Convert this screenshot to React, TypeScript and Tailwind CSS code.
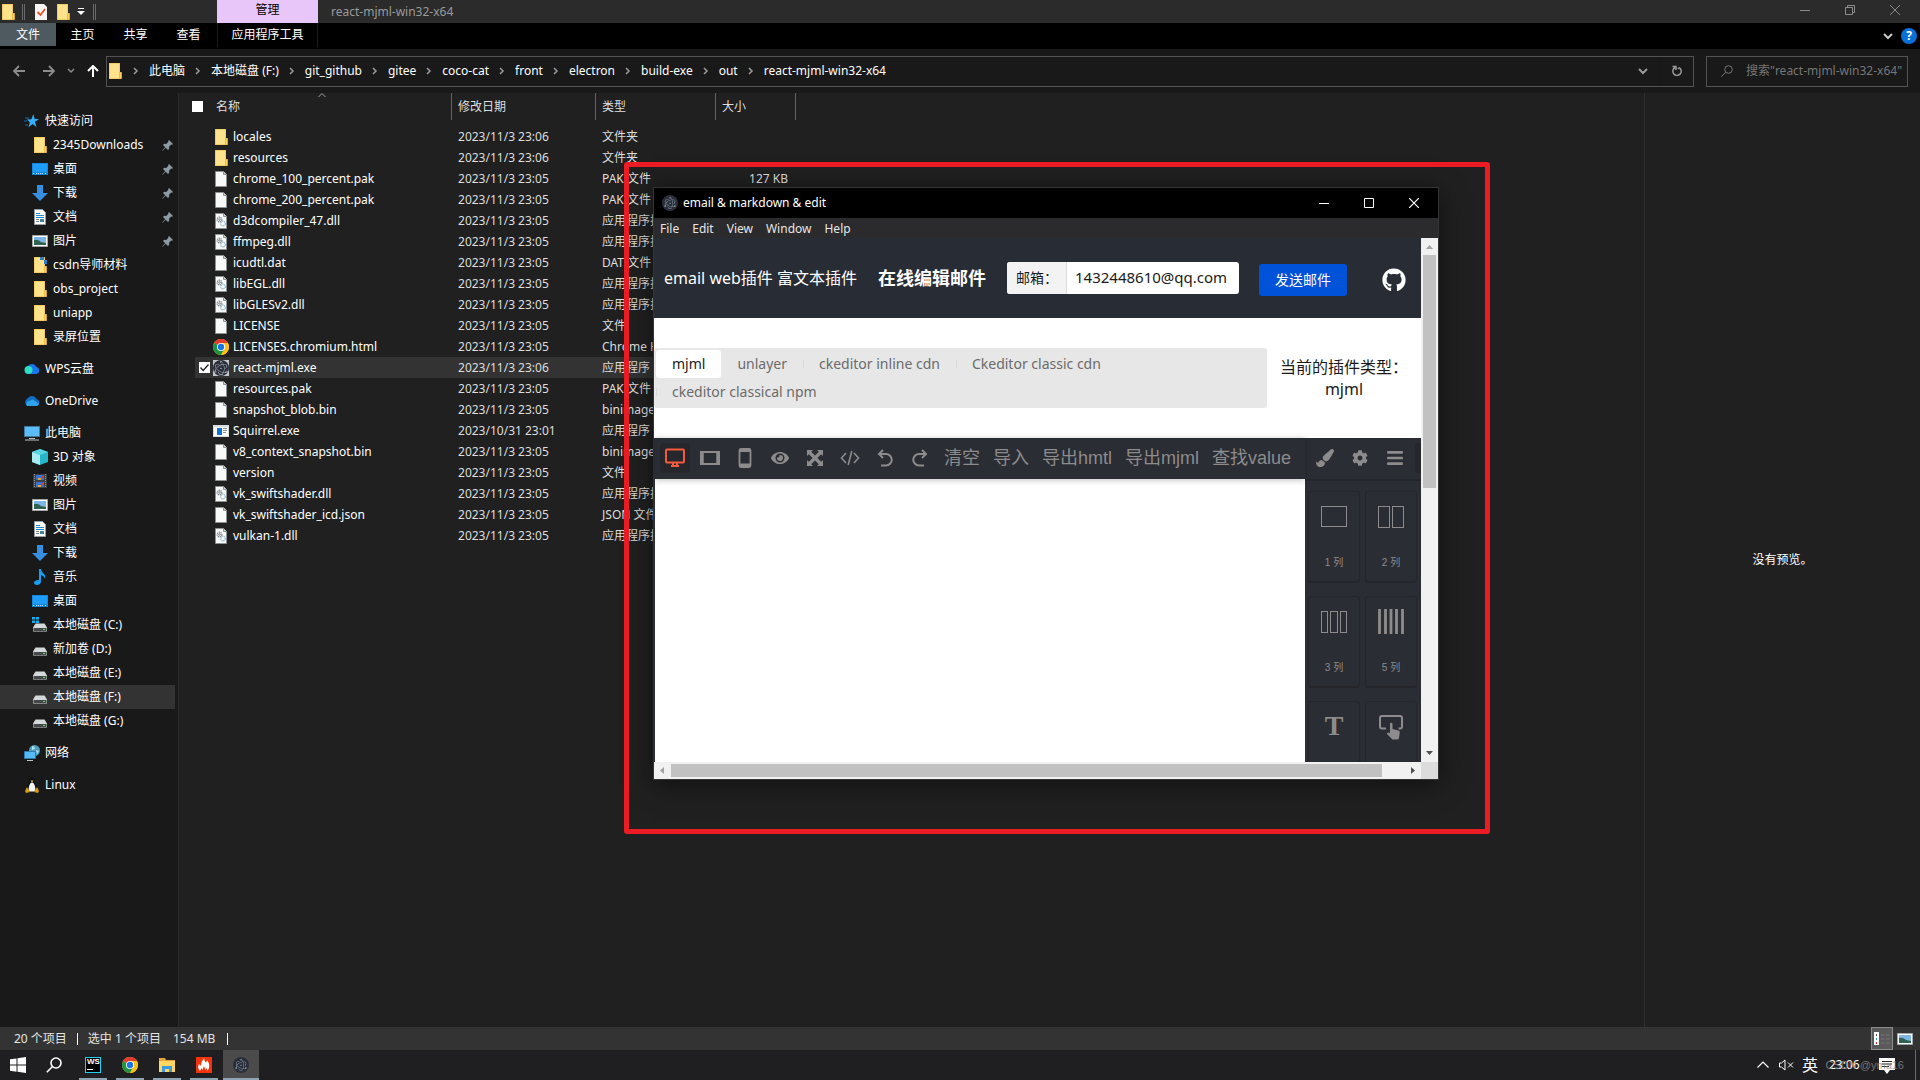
// src/App.tsx
import React from 'react';
import { FaBars, FaCode, FaCog, FaEye, FaGithub, FaPaintBrush } from 'react-icons/fa';
import { SiElectron } from 'react-icons/si';

type FileKind = 'folder' | 'file' | 'dll' | 'chrome' | 'electron' | 'exe';

interface FileRow {
  name: string;
  kind: FileKind;
  date: string;
  type: string;
  size?: string;
}

const files: FileRow[] = [
  { name: 'locales', kind: 'folder', date: '2023/11/3 23:06', type: '文件夹' },
  { name: 'resources', kind: 'folder', date: '2023/11/3 23:06', type: '文件夹' },
  { name: 'chrome_100_percent.pak', kind: 'file', date: '2023/11/3 23:05', type: 'PAK 文件', size: '127 KB' },
  { name: 'chrome_200_percent.pak', kind: 'file', date: '2023/11/3 23:05', type: 'PAK 文件' },
  { name: 'd3dcompiler_47.dll', kind: 'dll', date: '2023/11/3 23:05', type: '应用程序扩展' },
  { name: 'ffmpeg.dll', kind: 'dll', date: '2023/11/3 23:05', type: '应用程序扩展' },
  { name: 'icudtl.dat', kind: 'file', date: '2023/11/3 23:05', type: 'DAT 文件' },
  { name: 'libEGL.dll', kind: 'dll', date: '2023/11/3 23:05', type: '应用程序扩展' },
  { name: 'libGLESv2.dll', kind: 'dll', date: '2023/11/3 23:05', type: '应用程序扩展' },
  { name: 'LICENSE', kind: 'file', date: '2023/11/3 23:05', type: '文件' },
  { name: 'LICENSES.chromium.html', kind: 'chrome', date: '2023/11/3 23:05', type: 'Chrome HTML' },
  { name: 'react-mjml.exe', kind: 'electron', date: '2023/11/3 23:06', type: '应用程序' },
  { name: 'resources.pak', kind: 'file', date: '2023/11/3 23:05', type: 'PAK 文件' },
  { name: 'snapshot_blob.bin', kind: 'file', date: '2023/11/3 23:05', type: 'binimage' },
  { name: 'Squirrel.exe', kind: 'exe', date: '2023/10/31 23:01', type: '应用程序' },
  { name: 'v8_context_snapshot.bin', kind: 'file', date: '2023/11/3 23:05', type: 'binimage' },
  { name: 'version', kind: 'file', date: '2023/11/3 23:05', type: '文件' },
  { name: 'vk_swiftshader.dll', kind: 'dll', date: '2023/11/3 23:05', type: '应用程序扩展' },
  { name: 'vk_swiftshader_icd.json', kind: 'file', date: '2023/11/3 23:05', type: 'JSON 文件' },
  { name: 'vulkan-1.dll', kind: 'dll', date: '2023/11/3 23:05', type: '应用程序扩展' },
];

const crumbs = ['此电脑', '本地磁盘 (F:)', 'git_github', 'gitee', 'coco-cat', 'front', 'electron', 'build-exe', 'out', 'react-mjml-win32-x64'];

/* ---------- icons ---------- */

const FolderIcon = ({ synced = false }: { synced?: boolean }) => (
  <svg width="16" height="16" viewBox="0 0 16 16" aria-hidden="true">
    <path d="M2 0h11v9h1.500v7H2z" fill="#e9b93c" />
    <path d="M2.500 .5h10v15h-10z" fill="#ffe28c" />
    <path d="M12.500 9.500h2v6h-2z" fill="#ffd45c" stroke="#dfae35" strokeWidth=".6" />
    {synced && <path d="M8 0h4v3H8zM12 3h3v4h-3z" fill="#2f7fc4" />}
  </svg>
);

const FileIcon = ({ gears = false }: { gears?: boolean }) => (
  <svg width="16" height="16" viewBox="0 0 16 16" aria-hidden="true">
    <path d="M2.500 .5h8l3 3v12h-11z" fill="#f7f8f8" stroke="#8d9191" />
    <path d="M10.500 .5v3h3" fill="#d8dbdb" stroke="#8d9191" />
    {gears && (
      <g fill="none">
        <circle cx="6.500" cy="6.500" r="2.300" stroke="#7d8489" strokeWidth="1.300" strokeDasharray="1.200 .6" />
        <circle cx="6.500" cy="6.500" r=".8" stroke="#7d8489" />
        <circle cx="10" cy="10.500" r="2.300" stroke="#8fb6cc" strokeWidth="1.300" strokeDasharray="1.200 .6" />
      </g>
    )}
  </svg>
);

const ChromeIcon = () => (
  <svg width="16" height="16" viewBox="0 0 48 48" aria-hidden="true">
    <circle cx="24" cy="24" r="24" fill="#fbc116" />
    <path d="M24 24 3.200 12A24 24 0 0 1 44.800 12z" fill="#e33b2e" />
    <path d="M3.200 12A24 24 0 0 0 24 48l10.400-18z" fill="#229342" />
    <path d="M24 12h20.800A24 24 0 0 1 24 48l10.400-18z" fill="#fbc116" />
    <circle cx="24" cy="24" r="12" fill="#fff" />
    <circle cx="24" cy="24" r="9.500" fill="#1a73e8" />
  </svg>
);

const ElectronBadge = ({ square = false }: { square?: boolean }) => (
  <span
    className={
      square
        ? 'flex size-4 items-center justify-center bg-[#c3c6c9] text-sm text-[#e3f6fa]'
        : 'flex size-4 items-center justify-center rounded-full bg-[#2b2e3a] text-xs text-[#b4d8e2]'
    }
  >
    {square ? (
      <span className="flex size-4 items-center justify-center rounded-full bg-[#2b2e3a]">
        <SiElectron aria-hidden="true" />
      </span>
    ) : (
      <SiElectron aria-hidden="true" />
    )}
  </span>
);

const ExeIcon = () => (
  <svg width="16" height="16" viewBox="0 0 16 16" aria-hidden="true">
    <path d="M0 2h16v12H0z" fill="#d9dcde" />
    <path d="M1 4h14v9H1z" fill="#fff" />
    <path d="M4 5h5v7H4z" fill="#1173d4" />
    <path d="M10 5.500h4M10 7.500h4M10 9.500h3" stroke="#8a9196" />
  </svg>
);

const fileIcons: Record<FileKind, React.ReactNode> = {
  folder: <FolderIcon />,
  file: <FileIcon />,
  dll: <FileIcon gears />,
  chrome: <ChromeIcon />,
  electron: <ElectronBadge square />,
  exe: <ExeIcon />,
};

const StarIcon = () => (
  <svg width="16" height="16" viewBox="0 0 16 16" aria-hidden="true">
    <path d="m9.500 1 1 4.800 4.500.4-4 2.600 1.500 5.200-4-3-4 3.200 1.300-5-3-2.600 4.500-.4z" fill="#35aef5" />
    <path d="M1 5h4M0 8h3M1 12h3" stroke="#1b6ea8" />
  </svg>
);

const DesktopIcon = () => (
  <svg width="16" height="16" viewBox="0 0 16 16" aria-hidden="true">
    <path d="M0 2h16v12H0z" fill="#1187e0" />
    <path d="M1 3h14v8H1z" fill="#1e9dff" />
    <path d="M1 12.500h1M4 12.500h8M13 12.500h2" stroke="#bfe3ff" strokeDasharray="1 1" />
  </svg>
);

const DownIcon = () => (
  <svg width="16" height="16" viewBox="0 0 16 16" aria-hidden="true">
    <path d="M5 0h6v8h5l-8 8-8-8h5z" fill="#378fe2" />
  </svg>
);

const DocIcon = () => (
  <svg width="16" height="16" viewBox="0 0 16 16" aria-hidden="true">
    <path d="M2.500 .5h8l3 3v12h-11z" fill="#fff" stroke="#9aa0a3" />
    <path d="M4 4.500h4M4 6.500h8M4 8.500h8" stroke="#2a86cf" />
    <path d="M4 10.500h3M4 12.500h3" stroke="#7e868b" />
    <path d="M8 10h4v3H8z" fill="#43809a" />
  </svg>
);

const PictureIcon = () => (
  <svg width="16" height="16" viewBox="0 0 16 16" aria-hidden="true">
    <path d="M.5 2.500h15v11H.5z" fill="#fff" stroke="#a3a7a9" />
    <path d="M2 4h12v8H2z" fill="#7fb6ea" />
    <path d="M2 7q4-1 7 2l5 1v2H2z" fill="#2f6250" />
  </svg>
);

const CloudIcon = ({ wps = false }: { wps?: boolean }) => (
  <svg width="16" height="16" viewBox="0 0 16 16" aria-hidden="true">
    <path d="M4 13a4 4 0 0 1-.5-7.500A5 5 0 0 1 12.500 6 3.600 3.600 0 0 1 12.500 13z" fill={wps ? '#1776ee' : '#0f6fc5'} />
    {wps ? <circle cx="4.500" cy="9" r="4" fill="#2fdcc4" /> : <path d="M3 13a3 3 0 0 1 2-5l4-1.500L15 11q-1 2-3 2z" fill="#2ea3ea" />}
  </svg>
);

const ComputerIcon = () => (
  <svg width="16" height="16" viewBox="0 0 16 16" aria-hidden="true">
    <path d="M.5 1.500h15v10H.5z" fill="#5bbcfa" stroke="#417a9c" />
    <path d="M5 13.500h6M1 15h14" stroke="#b7c4cc" />
  </svg>
);

const CubeIcon = () => (
  <svg width="16" height="16" viewBox="0 0 16 16" aria-hidden="true">
    <path d="m8 0 8 3v10l-8 3-8-3V3z" fill="#25b6c9" />
    <path d="m8 0 8 3-8 3-8-3z" fill="#58d5e2" />
    <path d="m0 3 8 3v10l-8-3z" fill="#a9eaf0" />
  </svg>
);

const VideoIcon = () => (
  <svg width="16" height="16" viewBox="0 0 16 16" aria-hidden="true">
    <path d="M1 1h14v14H1z" fill="#3c3f42" />
    <path d="M2.500 1v14M13.500 1v14" stroke="#8f9497" strokeDasharray="1 1" />
    <path d="M4 2h8v5H4zM4 9h8v5H4z" fill="#3a6fd6" />
    <path d="M6 5h3v2H6zM6 12h3v2H6z" fill="#e0a52c" />
    <path d="M9 3h2v2H9zM9 10h2v2H9z" fill="#c9402f" />
  </svg>
);

const MusicIcon = () => (
  <svg width="16" height="16" viewBox="0 0 16 16" aria-hidden="true">
    <path d="M7 0h2q0 2 2 4 3 2 2 6-.5-3-4-4v6q0 3.500-3.500 4Q2 16 2 13.500 2.500 11 7 11z" fill="#16a0f5" />
  </svg>
);

const DriveIcon = ({ system = false }: { system?: boolean }) => (
  <svg width="16" height="16" viewBox="0 0 16 16" aria-hidden="true">
    <path d="M3.500 6.500h9l2.500 4v4H1v-4z" fill="#d5d8da" />
    <path d="M1.500 11h13v3h-13z" fill="#45484b" />
    <path d="M11 12h2v1h-2z" fill="#5cdb4c" />
    {system && <path d="M0 0h3v2.500H0zM4 0h3v2.500H4zM0 3.500h3V6H0zM4 3.500h3V6H4z" fill="#12aef0" />}
  </svg>
);

const NetworkIcon = () => (
  <svg width="16" height="16" viewBox="0 0 16 16" aria-hidden="true">
    <circle cx="10.500" cy="5.500" r="5.500" fill="#4b9fbf" />
    <path d="M8 1q3 0 3 3L8 5zM12 5l3 1-2 3z" fill="#b6dcea" />
    <path d="M.5 6.500h11v7H.5z" fill="#58b9f7" stroke="#2e7db0" />
    <path d="M3 15.500h6" stroke="#b7c4cc" />
  </svg>
);

const LinuxIcon = () => (
  <svg width="16" height="16" viewBox="0 0 16 16" aria-hidden="true">
    <path d="M8 0q3 0 3 4 0 2 2 5t0 5H3q-2-2 0-5t2-5q0-4 3-4z" fill="#111" />
    <path d="M8 5.500q2 0 3 4t-1 5H6q-2-1-1-5t3-4z" fill="#f4f4f4" />
    <path d="M6.500 3.500h3L8 5.500z" fill="#f0b323" />
    <path d="m3 10 3 5-4 1-1-2zM13 10l-3 5 4 1 1-2z" fill="#d99a16" />
  </svg>
);

const PinIcon = () => (
  <svg width="11" height="11" viewBox="0 0 11 11" className="ml-auto" aria-hidden="true">
    <path d="m7 0 4 4-1 .8-.8-.2L7 6.800l.2 2L6 10 3.800 7.700.5 10.800l-.4-.4L3.300 7.200 1 5l1.200-1.200 2 .2L6.400 1.800 6.200.9z" fill="#8f9ba3" />
  </svg>
);

const Chevron = ({ className = '' }: { className?: string }) => (
  <svg width="10" height="10" viewBox="0 0 10 10" fill="none" stroke="currentColor" strokeWidth="2" className={className} aria-hidden="true">
    <path d="m1 3 4 4 4-4" />
  </svg>
);

/* ---------- sidebar ---------- */

interface NavItem {
  label: string;
  icon: React.ReactNode;
  pinned?: boolean;
  active?: boolean;
}

interface NavGroup {
  head: NavItem;
  children?: NavItem[];
}

const navGroups: NavGroup[] = [
  {
    head: { label: '快速访问', icon: <StarIcon /> },
    children: [
      { label: '2345Downloads', icon: <FolderIcon />, pinned: true },
      { label: '桌面', icon: <DesktopIcon />, pinned: true },
      { label: '下载', icon: <DownIcon />, pinned: true },
      { label: '文档', icon: <DocIcon />, pinned: true },
      { label: '图片', icon: <PictureIcon />, pinned: true },
      { label: 'csdn导师材料', icon: <FolderIcon synced /> },
      { label: 'obs_project', icon: <FolderIcon /> },
      { label: 'uniapp', icon: <FolderIcon /> },
      { label: '录屏位置', icon: <FolderIcon /> },
    ],
  },
  { head: { label: 'WPS云盘', icon: <CloudIcon wps /> } },
  { head: { label: 'OneDrive', icon: <CloudIcon /> } },
  {
    head: { label: '此电脑', icon: <ComputerIcon /> },
    children: [
      { label: '3D 对象', icon: <CubeIcon /> },
      { label: '视频', icon: <VideoIcon /> },
      { label: '图片', icon: <PictureIcon /> },
      { label: '文档', icon: <DocIcon /> },
      { label: '下载', icon: <DownIcon /> },
      { label: '音乐', icon: <MusicIcon /> },
      { label: '桌面', icon: <DesktopIcon /> },
      { label: '本地磁盘 (C:)', icon: <DriveIcon system /> },
      { label: '新加卷 (D:)', icon: <DriveIcon /> },
      { label: '本地磁盘 (E:)', icon: <DriveIcon /> },
      { label: '本地磁盘 (F:)', icon: <DriveIcon />, active: true },
      { label: '本地磁盘 (G:)', icon: <DriveIcon /> },
    ],
  },
  { head: { label: '网络', icon: <NetworkIcon /> } },
  { head: { label: 'Linux', icon: <LinuxIcon /> } },
];

const Sidebar: React.FC = () => (
  <nav className="flex w-[179px] shrink-0 flex-col gap-2 border-r border-[#2b2b2b] bg-[#191919] pt-4 pr-[3px]">
    {navGroups.map((group) => (
      <div key={group.head.label}>
        <a href="#" className="flex h-6 items-center gap-[5px] pl-6">
          {group.head.icon}
          {group.head.label}
        </a>
        {group.children?.map((item) => (
          <a
            href="#"
            key={item.label}
            className={`flex h-6 items-center gap-[5px] pr-[2px] pl-8 ${item.active ? 'bg-[#333333]' : ''}`}
          >
            {item.icon}
            {item.label}
            {item.pinned && <PinIcon />}
          </a>
        ))}
      </div>
    ))}
  </nav>
);

/* ---------- explorer ---------- */

const ExplorerHeader: React.FC = () => (
  <header>
    <div className="flex h-[23px] bg-[#2b2b2b]">
      <div className="flex w-[217px] items-center">
        <FolderIcon />
        <span className="ml-[6px] h-4 w-[3px] border-x border-[#6a6a6a]" />
        <svg width="16" height="16" viewBox="0 0 16 16" className="ml-2" aria-hidden="true">
          <path d="M2 0h9l3 3v13H2z" fill="#f5f5f5" />
          <path d="m4.500 8 3 3 4.500-6" fill="none" stroke="#e2542a" strokeWidth="1.800" />
        </svg>
        <span className="ml-[6px]">
          <FolderIcon />
        </span>
        <svg width="8" height="8" viewBox="0 0 8 8" fill="#fff" className="ml-[6px]" aria-hidden="true">
          <path d="M1 0h6v1H1zM0 3h8L4 7z" />
        </svg>
        <span className="ml-2 h-4 w-[3px] border-x border-[#6a6a6a]" />
      </div>
      <div className="w-[101px] bg-[#e9c6fa] text-center leading-5 text-black">管理</div>
      <h1 className="flex-1 pl-[13px] leading-6 text-[#9a9a9a]">react-mjml-win32-x64</h1>
      <div className="flex items-center pr-[2px] pb-[3px] text-[#8c8c8c]">
        <button aria-label="最小化" className="flex w-[45px] justify-center">
          <svg width="10" height="10" viewBox="0 0 10 10" stroke="currentColor"><path d="M0 5.500h10" /></svg>
        </button>
        <button aria-label="还原" className="flex w-[45px] justify-center">
          <svg width="10" height="10" viewBox="0 0 10 10" fill="none" stroke="currentColor"><path d="M.5 2.500h7v7h-7zM2.500 2.500v-2h7v7h-2" /></svg>
        </button>
        <button aria-label="关闭" className="flex w-[46px] justify-center">
          <svg width="10" height="10" viewBox="0 0 10 10" stroke="currentColor"><path d="m0 0 10 10M10 0 0 10" /></svg>
        </button>
      </div>
    </div>

    <div className="flex h-[26px] items-start bg-black">
      <button className="h-[23px] w-14 bg-[#4e5a5f]">文件</button>
      <button className="h-[24px] w-[53px]">主页</button>
      <button className="h-[24px] w-[53px]">共享</button>
      <button className="h-[24px] w-[53px]">查看</button>
      <button className="ml-[2px] h-[24px] w-[101px] border-x border-[#1c1c1c]">应用程序工具</button>
      <div className="ml-auto flex h-[26px] items-center gap-2 pr-[3px]">
        <Chevron className="text-[#c9c9c9]" />
        <span className="flex size-4 items-center justify-center rounded-full bg-[#0a6fd6] font-bold">?</span>
      </div>
    </div>

    <div className="flex h-11 items-center bg-[#191919] pr-3 pl-[13px]">
      <button aria-label="后退" className="text-[#8c8c8c]">
        <svg width="12" height="12" viewBox="0 0 12 12" fill="none" stroke="currentColor" strokeWidth="1.800"><path d="M6 1 1 6l5 5M1 6h11" /></svg>
      </button>
      <button aria-label="前进" className="ml-[18px] text-[#8c8c8c]">
        <svg width="12" height="12" viewBox="0 0 12 12" fill="none" stroke="currentColor" strokeWidth="1.800"><path d="m6 1 5 5-5 5M11 6H0" /></svg>
      </button>
      <button aria-label="最近位置" className="ml-3 text-[#8c8c8c]">
        <svg width="8" height="8" viewBox="0 0 8 8" fill="none" stroke="currentColor" strokeWidth="1.500"><path d="m1 2 3 3 3-3" /></svg>
      </button>
      <button aria-label="上移" className="ml-3 text-white">
        <svg width="12" height="12" viewBox="0 0 12 12" fill="none" stroke="currentColor" strokeWidth="2"><path d="M1 6l5-5 5 5M6 1v11" /></svg>
      </button>
      <div className="ml-[7px] flex h-[31px] flex-1 items-center border border-[#535353]">
        <FolderIcon />
        {crumbs.map((crumb) => (
          <React.Fragment key={crumb}>
            <span className="flex w-[26px] justify-center text-[#9a9a9a]">
              <svg width="6" height="8" viewBox="0 0 6 8" fill="none" stroke="currentColor" strokeWidth="1.500" aria-hidden="true"><path d="m1 1 3 3-3 3" /></svg>
            </span>
            <a href="#" className="whitespace-nowrap">{crumb}</a>
          </React.Fragment>
        ))}
        <button aria-label="历史记录" className="ml-auto text-[#9a9a9a]">
          <Chevron />
        </button>
        <button aria-label="刷新" className="ml-3 flex h-full w-[33px] items-center justify-center border-l border-[#161616] text-[#9a9a9a]">
          <svg width="12" height="12" viewBox="0 0 12 12" fill="none" stroke="currentColor" strokeWidth="1.500"><path d="M4 2.500A4.200 4.200 0 1 0 8.500 2.800M1.500 1.500H5v3.500M8.500 2.500 7 4" /></svg>
        </button>
      </div>
      <label className="ml-3 flex h-[31px] w-[202px] items-center border border-[#535353] pl-[14px] text-[#777777]">
        <svg width="12" height="12" viewBox="0 0 12 12" fill="none" stroke="currentColor" aria-hidden="true"><circle cx="7.500" cy="4.500" r="3.800" /><path d="m4.800 7.200-4.500 4.500" /></svg>
        <input
          aria-label="搜索"
          placeholder={'搜索"react-mjml-win32-x64"'}
          className="ml-[13px] w-0 flex-1 bg-transparent outline-none placeholder:text-[#777777]"
        />
      </label>
    </div>
  </header>
);

const FileTable: React.FC = () => (
  <table className="w-[616px] table-fixed border-collapse text-left">
    <colgroup>
      <col className="w-[15px]" />
      <col className="w-[257px]" />
      <col className="w-36" />
      <col className="w-[120px]" />
      <col className="w-20" />
    </colgroup>
    <thead>
      <tr className="h-[33px] align-top text-[#dedede]">
        <th colSpan={2} className="relative p-0 font-normal">
          <div className="flex h-[27px] items-center gap-[13px] border-r border-[#636363] pl-3">
            <input type="checkbox" aria-label="全选" className="size-[11px] appearance-none bg-white" />
            名称
          </div>
          <svg width="8" height="5" viewBox="0 0 8 5" fill="none" stroke="#a0a0a0" className="absolute top-0 left-[138px]" aria-hidden="true"><path d="m.5 4 3.500-3.500L7.500 4" /></svg>
        </th>
        {['修改日期', '类型', '大小'].map((title) => (
          <th key={title} className="p-0 font-normal">
            <div className="flex h-[27px] items-center border-r border-[#636363] pl-[6px]">{title}</div>
          </th>
        ))}
      </tr>
    </thead>
    <tbody>
      {files.map((file) => {
        const selected = file.kind === 'electron';
        const tone = selected ? 'bg-[#333333] p-0' : 'p-0';
        return (
          <tr key={file.name} className="h-[21px]">
            <td className="p-0" />
            <td className={tone}>
              <div className="flex items-center">
                <span className="flex w-[18px] justify-center">
                  {selected && (
                    <span className="relative flex size-[11px]">
                      <input type="checkbox" defaultChecked aria-label={file.name} className="size-[11px] appearance-none bg-white" />
                      <svg width="11" height="11" viewBox="0 0 11 11" fill="none" stroke="#222" strokeWidth="1.300" className="absolute inset-0" aria-hidden="true"><path d="m1.500 5.500 2.700 3 5.300-6" /></svg>
                    </span>
                  )}
                </span>
                {fileIcons[file.kind]}
                <span className="ml-1 leading-5 whitespace-nowrap">{file.name}</span>
              </div>
            </td>
            <td className={`${tone} pl-[6px] whitespace-nowrap text-[#dedede]`}>{file.date}</td>
            <td className={`${tone} truncate pl-[6px] text-[#dedede]`}>{file.type}</td>
            <td className={`${tone} pr-2 text-right text-[#dedede]`}>{file.size}</td>
          </tr>
        );
      })}
    </tbody>
  </table>
);

/* ---------- mail editor window ---------- */

const pluginTabs = ['mjml', 'unlayer', 'ckeditor inline cdn', 'Ckeditor classic cdn', 'ckeditor classical npm'];

const toolIcons: { label: string; icon: React.ReactNode }[] = [
  {
    label: 'Desktop',
    icon: <svg width="20" height="20" viewBox="0 0 20 20" fill="none" stroke="currentColor" strokeWidth="2"><rect x="1" y="1.500" width="18" height="13" rx="1" /><path d="M8 15v3M12 15v3M6 18h8" /></svg>,
  },
  {
    label: 'Tablet',
    icon: <svg width="20" height="20" viewBox="0 0 20 20" fill="none" stroke="currentColor" strokeWidth="2"><path d="M1 4h18v12H1z" /><path d="M2.500 4v12M17.500 4v12" strokeWidth="2.500" /></svg>,
  },
  {
    label: 'Mobile',
    icon: <svg width="20" height="20" viewBox="0 0 20 20" fill="none" stroke="currentColor" strokeWidth="1.800"><rect x="4.500" y="1" width="11" height="18" rx="1.500" /><path d="M5 2.500h10M5 17h10" strokeWidth="3" /></svg>,
  },
  { label: 'Preview', icon: <FaEye /> },
  {
    label: 'Fullscreen',
    icon: <svg width="18" height="18" viewBox="0 0 18 18" fill="currentColor"><path d="M1 1h6L5.200 2.800 9 6.600l3.800-3.800L11 1h6v6l-1.800-1.800L11.400 9l3.800 3.800L17 11v6h-6l1.800-1.800L9 11.400l-3.800 3.800L7 17H1v-6l1.800 1.800L6.600 9 2.800 5.200 1 7z" /></svg>,
  },
  {
    label: 'Code',
    icon: <svg width="20" height="18" viewBox="0 0 20 18" fill="none" stroke="currentColor" strokeWidth="1.600"><path d="M6 4 1.500 9 6 14M14 4l4.500 5-4.500 5M11.800 2 8.200 16" /></svg>,
  },
  {
    label: 'Undo',
    icon: <svg width="18" height="18" viewBox="0 0 18 18" fill="none" stroke="currentColor" strokeWidth="2"><path d="M7 1 3 5l4 4M3 5h7a5.500 5.500 0 0 1 0 11.500H5" /></svg>,
  },
  {
    label: 'Redo',
    icon: <svg width="18" height="18" viewBox="0 0 18 18" fill="none" stroke="currentColor" strokeWidth="2"><path d="m11 1 4 4-4 4M15 5H8a5.500 5.500 0 0 0 0 11.500h5" /></svg>,
  },
];

const blocks: { id: string; label?: string; icon: React.ReactNode }[] = [
  {
    id: 'col-1',
    label: '1 列',
    icon: <svg width="26" height="26" viewBox="0 0 26 26" fill="none" stroke="currentColor"><rect x=".5" y="2.500" width="25" height="20" /></svg>,
  },
  {
    id: 'col-2',
    label: '2 列',
    icon: <svg width="26" height="26" viewBox="0 0 26 26" fill="none" stroke="currentColor"><rect x=".5" y="2.500" width="11" height="21" /><rect x="14.500" y="2.500" width="11" height="21" /></svg>,
  },
  {
    id: 'col-3',
    label: '3 列',
    icon: <svg width="26" height="26" viewBox="0 0 26 26" fill="none" stroke="currentColor"><rect x=".5" y="2.500" width="6" height="21" /><rect x="9.500" y="2.500" width="7" height="21" /><rect x="19.500" y="2.500" width="6" height="21" /></svg>,
  },
  {
    id: 'col-5',
    label: '5 列',
    icon: <svg width="26" height="26" viewBox="0 0 26 26" fill="none" stroke="currentColor" strokeWidth="2.800"><path d="M1.500 0v25M7.500 0v25M13 0v25M18.500 0v25M24.500 0v25" /></svg>,
  },
  { id: 'text', icon: <span className="font-['Liberation_Serif',serif] text-[28px] leading-6 font-bold">T</span> },
  {
    id: 'button',
    icon: (
      <svg width="26" height="26" viewBox="0 0 26 26" aria-hidden="true">
        <path d="M8 14.500H4Q2 14.500 2 12.500V4q0-2 2-2h18q2 0 2 2v8.500q0 2-2 2h-1.500" fill="none" stroke="currentColor" strokeWidth="2" />
        <path d="M12 9.500q1.300-1.500 2.500 0V15l6 1.500q1.500.5 1.300 2L21 24q-.3 1.500-1.500 1.500h-5L9 20q0-2 2-1.500l1 .7z" fill="currentColor" />
      </svg>
    ),
  },
];

const EditorWindow: React.FC = () => (
  <section className="absolute top-[187px] left-[653px] flex h-[593px] w-[786px] flex-col border border-[#343434] bg-white shadow-[0_4px_24px_rgba(0,0,0,0.5)]">
    <div className="flex h-[30px] shrink-0 items-center bg-black pr-px pl-2">
      <ElectronBadge />
      <h2 className="ml-[5px] flex-1">email &amp; markdown &amp; edit</h2>
      <button aria-label="Minimize" className="flex w-[45px] justify-center">
        <svg width="10" height="10" viewBox="0 0 10 10" stroke="currentColor"><path d="M0 5.500h10" /></svg>
      </button>
      <button aria-label="Maximize" className="flex w-[45px] justify-center">
        <svg width="10" height="10" viewBox="0 0 10 10" fill="none" stroke="currentColor"><path d="M.5 .5h9v9h-9z" /></svg>
      </button>
      <button aria-label="Close" className="flex w-[46px] justify-center">
        <svg width="10" height="10" viewBox="0 0 10 10" stroke="currentColor" strokeWidth="1.200"><path d="m0 0 10 10M10 0 0 10" /></svg>
      </button>
    </div>
    <div className="flex h-5 shrink-0 items-end gap-[13px] bg-[#2b2b2d] pl-[6px] text-[#e6e6e6]">
      {['File', 'Edit', 'View', 'Window', 'Help'].map((menu) => (
        <button key={menu} className="leading-[18px]">{menu}</button>
      ))}
    </div>

    <div className="flex min-h-0 flex-1">
      <div className="flex min-w-0 flex-1 flex-col">
        <div className="flex h-20 shrink-0 items-center bg-[#282c34] pl-[10px]">
          <span className="w-[214px] text-base whitespace-nowrap">email web插件 富文本插件</span>
          <strong className="w-[129px] text-lg whitespace-nowrap">在线编辑邮件</strong>
          <div className="flex h-8 items-stretch overflow-hidden rounded-[3px] bg-white text-[#1a1a1a]">
            <label htmlFor="mail" className="flex w-[60px] items-center border-r border-[#dcdcdc] bg-[#f3f3f3] pl-[9px] text-sm whitespace-nowrap">邮箱：</label>
            <input id="mail" defaultValue="1432448610@qq.com" className="w-[172px] pb-[2px] pl-2 text-[15px] outline-none" />
          </div>
          <button className="mt-1 ml-5 h-8 w-[88px] rounded-[3px] bg-[#0052d9] text-sm">发送邮件</button>
          <a href="#" aria-label="GitHub" className="mt-1 mr-[15px] ml-auto text-2xl">
            <FaGithub />
          </a>
        </div>

        <div className="flex h-[120px] shrink-0 items-center">
          <div className="flex w-[613px] flex-wrap rounded-[3px] bg-[#e7e7e7] p-[2px]">
            {pluginTabs.map((tab, i) => (
              <button
                key={tab}
                className={`flex h-7 items-center text-sm ${i === 0 ? 'rounded-[3px] bg-white text-[#1a1a1a]' : 'text-[#6b6b6b]'}`}
              >
                {i > 1 && <span className="-mr-px h-2 w-px bg-[#d9d9d9]" />}
                <span className="px-4">{tab}</span>
              </button>
            ))}
          </div>
          <p className="flex-1 text-center text-base leading-[22px] text-[#1a1a1a]">
            当前的插件类型：
            <br />
            mjml
          </p>
        </div>

        <div className="flex min-h-0 flex-1 border-l border-[#2a2d34] font-['Liberation_Sans','Noto_Sans_CJK_SC',sans-serif] text-[#8d8b8b]">
          <div className="flex min-w-0 flex-1 flex-col">
            <div className="z-10 flex h-[41px] shrink-0 items-center bg-[#2a2d34] pb-[2px] pl-[5px] text-lg shadow-[0_1px_6px_rgba(0,0,0,0.25)]">
              <div className="flex gap-[5px]">
                {toolIcons.map((tool, i) => (
                  <button
                    key={tool.label}
                    aria-label={tool.label}
                    className={`flex size-[30px] items-center justify-center rounded-sm ${i === 0 ? 'bg-[#25272c] text-[#f45a3c]' : ''}`}
                  >
                    {tool.icon}
                  </button>
                ))}
              </div>
              <div className="ml-[9px] flex gap-[13px] whitespace-nowrap">
                {['清空', '导入', '导出hmtl', '导出mjml', '查找value'].map((action) => (
                  <button key={action}>{action}</button>
                ))}
              </div>
            </div>
            <div className="flex-1 bg-white" />
          </div>

          <aside className="flex w-[116px] shrink-0 flex-col overflow-hidden bg-[#2a2d34]">
            <div className="flex h-[43px] shrink-0 items-center gap-[5px] border-b-2 border-[#24262b] pb-[2px] pl-[5px] text-base">
              <button aria-label="Style" className="flex size-[30px] shrink-0 items-center justify-center text-lg"><FaPaintBrush /></button>
              <button aria-label="Settings" className="flex size-[30px] shrink-0 items-center justify-center"><FaCog /></button>
              <button aria-label="Layers" className="flex size-[30px] shrink-0 items-center justify-center text-lg"><FaBars /></button>
              <button aria-label="Blocks" className="h-[30px] w-[30px] shrink-0 rounded-sm bg-[#25272c]" />
            </div>
            <div className="grid grid-cols-2 gap-x-[5px] gap-y-[14px] pt-[10px] pr-1 pl-[3px]">
              {blocks.map((block) => (
                <button key={block.id} className="flex h-[91px] flex-col items-center rounded-[3px] border border-[#24262b] pt-3 shadow-[0_1px_0_#24262b]">
                  {block.icon}
                  <span className="mt-auto mb-[10px] text-[10px] leading-4">{block.label}</span>
                </button>
              ))}
            </div>
          </aside>
        </div>
      </div>

      <div className="flex w-[17px] shrink-0 flex-col items-center bg-[#f1f1f1]">
        <svg width="17" height="17" viewBox="0 0 17 17" fill="#a3a3a3" aria-hidden="true"><path d="M5 11h7L8.500 7z" /></svg>
        <div className="h-[233px] w-[13px] bg-[#c1c1c1]" />
        <svg width="17" height="17" viewBox="0 0 17 17" fill="#505050" className="mt-auto" aria-hidden="true"><path d="M5 6h7L8.500 10z" /></svg>
      </div>
    </div>

    <div className="flex h-[17px] shrink-0 items-center bg-[#f1f1f1]">
      <svg width="17" height="17" viewBox="0 0 17 17" fill="#a3a3a3" aria-hidden="true"><path d="M10 5v7L6 8.500z" /></svg>
      <div className="h-[13px] w-[711px] bg-[#c1c1c1]" />
      <svg width="17" height="17" viewBox="0 0 17 17" fill="#505050" className="ml-auto" aria-hidden="true"><path d="M7 5v7l4-3.500z" /></svg>
      <div className="size-[17px] bg-[#dcdcdc]" />
    </div>
  </section>
);

/* ---------- taskbar ---------- */

const taskApps: { label: string; icon: React.ReactNode; active?: boolean }[] = [
  {
    label: 'WebStorm',
    icon: (
      <span className="flex size-4 flex-col border border-[#21d0f0] bg-black px-px">
        <span className="font-['Liberation_Sans',sans-serif] text-[8px] leading-2 font-bold">WS</span>
        <span className="mt-[3px] h-px w-[6px] bg-white" />
      </span>
    ),
  },
  { label: 'Chrome', icon: <ChromeIcon /> },
  {
    label: '文件资源管理器',
    icon: (
      <svg width="16" height="16" viewBox="0 0 16 16" aria-hidden="true">
        <path d="M0 1h6l1 2h9v12H0z" fill="#e8a33d" />
        <path d="M0 4h16v11H0z" fill="#ffd75e" />
        <path d="M3 15V9h10v6h-3v-3H6v3z" fill="#3a9be4" />
      </svg>
    ),
  },
  {
    label: 'Fire',
    icon: (
      <svg width="16" height="16" viewBox="0 0 16 16" aria-hidden="true">
        <path d="M0 0h16v16H0z" fill="#f4330c" />
        <path d="M4 14q-3-3-1-7l1.500 2Q5 5 8 1q0 3 2 4.500Q11 4 11 3q3 4 2 8l-1.500 3-1-3-1 2L8 9l-1.500 4-1-2z" fill="#fff" />
      </svg>
    ),
  },
  { label: 'email & markdown & edit', icon: <ElectronBadge />, active: true },
];

const Taskbar: React.FC = () => (
  <footer className="flex h-[30px] bg-[#1f1f21]">
    <button aria-label="开始" className="flex w-9 items-center justify-center">
      <svg width="16" height="16" viewBox="0 0 16 16" fill="#fff"><path d="m0 2.300 6.500-.9v6.200H0zM7.500 1.200 16 0v7.600H7.500zM0 8.500h6.500v6.200L0 13.800zM7.500 8.500H16V16l-8.500-1.200z" /></svg>
    </button>
    <button aria-label="搜索" className="mr-[3px] flex w-9 items-center justify-center">
      <svg width="16" height="16" viewBox="0 0 16 16" fill="none" stroke="#fff" strokeWidth="1.600"><circle cx="10" cy="6" r="5" /><path d="M6.500 9.500.8 15.200" /></svg>
    </button>
    <div className="flex gap-px">
      {taskApps.map((app) => (
        <button
          key={app.label}
          aria-label={app.label}
          className={`flex w-9 flex-col items-center pt-[7px] ${app.active ? 'bg-[#4b4b4c]' : ''}`}
        >
          {app.icon}
          <span className={`mt-auto h-[2px] bg-[#8ea4b3] ${app.active ? 'w-9' : 'w-7'}`} />
        </button>
      ))}
    </div>
    <div className="relative ml-auto flex items-center">
      <svg width="12" height="12" viewBox="0 0 12 12" fill="none" stroke="#fff" strokeWidth="1.200" aria-hidden="true"><path d="m.5 8.500L6 3l5.500 5.500" /></svg>
      <svg width="15" height="12" viewBox="0 0 15 12" fill="none" stroke="#fff" className="ml-[10px]" aria-hidden="true"><path d="M.5 4v4h2L6 11V1L2.500 4zM9 3.500l5 5M14 3.500l-5 5" /></svg>
      <span className="ml-2 text-base leading-5">英</span>
      <time className="ml-[11px] w-[50px]">23:06</time>
      <svg width="16" height="16" viewBox="0 0 16 16" className="mt-[2px]" aria-hidden="true">
        <path d="M0 0h16v12h-5l-3 4-3-4H0z" fill="#fff" />
        <path d="M3 3.500h10M3 6h10M3 8.500h7" stroke="#222" />
      </svg>
      <span className="ml-5 h-full w-px bg-[#6a6a6a]" />
      <span className="w-1" />
      <span className="absolute right-4 font-['Liberation_Sans',sans-serif] text-[11px] whitespace-nowrap text-[#8c8c8c]/80">CSDN @yma16</span>
    </div>
  </footer>
);

const App: React.FC = () => {
  return (
    <div className="relative flex min-h-screen flex-col overflow-hidden bg-[#202020] font-['Noto_Sans','Noto_Sans_CJK_SC',sans-serif] text-xs text-white">
      <ExplorerHeader />
      <div className="flex flex-1">
        <Sidebar />
        <main className="min-w-0 flex-1 pl-px">
          <FileTable />
        </main>
        <aside className="flex w-[276px] shrink-0 items-center justify-center border-l border-[#2f2f2f]">没有预览。</aside>
      </div>
      <div className="flex h-[23px] items-center bg-[#333333] pl-[14px] text-[#e4e4e4]">
        <span>20 个项目</span>
        <span className="mx-[10px] h-3 w-px bg-white" />
        <span>选中 1 个项目</span>
        <span className="ml-3">154 MB</span>
        <span className="ml-3 h-3 w-px bg-white" />
        <button aria-label="详细信息" className="ml-auto flex h-[23px] w-[22px] items-center justify-center border border-[#8c8c8c] bg-[#5a5a5a]">
          <svg width="16" height="14" viewBox="0 0 16 14"><path d="M0 0h5v13H0z" fill="#fff" /><path d="M2 2h1v2H2z" fill="#555" /><path d="M2 6h1v2H2z" fill="#3b8ede" /><path d="M2 10h1v2H2z" fill="#d33" /><path d="M7 3h3.500M12 3h3.500M7 7h3.500M12 7h3.500M7 11h3.500M12 11h3.500" stroke="#767676" /></svg>
        </button>
        <button aria-label="大图标" className="mr-[7px] ml-1">
          <PictureIcon />
        </button>
      </div>
      <Taskbar />

      <div className="pointer-events-none absolute top-[162px] left-[624px] h-[672px] w-[866px] rounded-[3px] border-[5px] border-[#ed1c24]" />
      <EditorWindow />
    </div>
  );
};

export default App;
